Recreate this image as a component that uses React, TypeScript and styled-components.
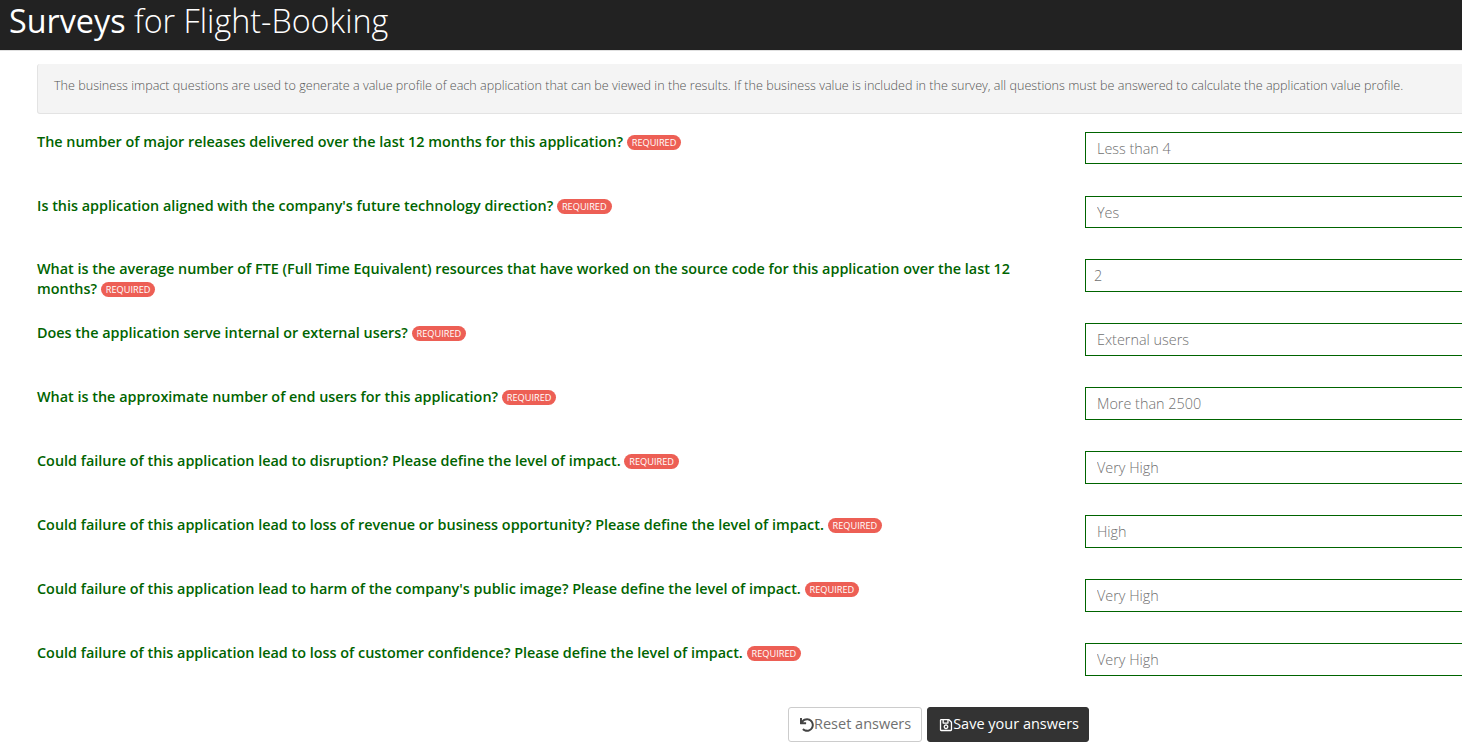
import React from "react";
import styled, { createGlobalStyle } from "styled-components";
import { FaUndo, FaRegSave } from "react-icons/fa";

const questions = [
  { text: "The number of major releases delivered over the last 12 months for this application?", answer: "Less than 4", compact: true },
  { text: "Is this application aligned with the company's future technology direction?", answer: "Yes", compact: true, short: true },
  { text: "What is the average number of FTE (Full Time Equivalent) resources that have worked on the source code for this application over the last 12 months?", answer: "2", numeric: true },
  { text: "Does the application serve internal or external users?", answer: "External users" },
  { text: "What is the approximate number of end users for this application?", answer: "More than 2500" },
  { text: "Could failure of this application lead to disruption? Please define the level of impact.", answer: "Very High" },
  { text: "Could failure of this application lead to loss of revenue or business opportunity? Please define the level of impact.", answer: "High" },
  { text: "Could failure of this application lead to harm of the company's public image? Please define the level of impact.", answer: "Very High" },
  { text: "Could failure of this application lead to loss of customer confidence? Please define the level of impact.", answer: "Very High" },
];

const App = () => {
  return (
    <>
      <GlobalStyle />
      <Header>
        <Title>
          <strong>Surveys</strong> for Flight-Booking
        </Title>
      </Header>
      <Main>
        <Well>
          The business impact questions are used to generate a value profile of each application that can be viewed in the results. If the business value is included in the survey, all questions must be answered to calculate the application value profile.
        </Well>
        <Form>
          {questions.map((q, i) => (
            <Row key={i} $short={q.short}>
              <Question>
                {q.text} <Badge>REQUIRED</Badge>
              </Question>
              <Answer readOnly value={q.answer} $numeric={q.numeric} $compact={q.compact} />
            </Row>
          ))}
        </Form>
        <Actions>
          <ResetButton type="button">
            <FaUndo size={14} />
            Reset answers
          </ResetButton>
          <SaveButton type="button">
            <FaRegSave size={14} />
            Save your answers
          </SaveButton>
        </Actions>
      </Main>
    </>
  );
};

const GlobalStyle = createGlobalStyle`
  html, body {
    margin: 0;
    padding: 0;
    background: #fff;
    overflow: hidden;
  }
  body {
    height: 751px;
    font-family: "Open Sans", "Liberation Sans", sans-serif;
    font-size: 14px;
  }
`;
const Header = styled.header`
  height: 51px;
  background: #222222;
  border-bottom: 1px solid #e0e0e0;
  box-sizing: border-box;
  padding-left: 9px;
  display: flex;
  align-items: flex-start;
`;
const Title = styled.h1`
  margin: 0;
  font-size: 32.3px;
  line-height: 41px;
  font-weight: 300;
  color: #fff;
  white-space: nowrap;
  strong {
    font-weight: 400;
  }
`;
const Main = styled.main`
  padding: 13px 0 0 37px;
  width: 1500px;
  box-sizing: border-box;
`;
const Well = styled.div`
  height: 50px;
  box-sizing: border-box;
  background: #f4f4f4;
  border: 1px solid #e3e3e3;
  border-top: none;
  border-radius: 3px;
  padding: 13px 16px 0;
  font-size: 12.6px;
  line-height: 17px;
  font-weight: 300;
  color: #555;
  white-space: nowrap;
`;
const Form = styled.div`
  margin-top: 18px;
  display: flex;
  flex-direction: column;
`;
const Row = styled.div<{ $short?: boolean }>`
  display: grid;
  grid-template-columns: 1048px 1fr;
  height: ${(p) => (p.$short ? "63px" : "64px")};
`;
const Question = styled.div`
  font-size: 14.4px;
  line-height: 20px;
  font-weight: 600;
  color: #006400;
  padding-right: 30px;
`;
const Badge = styled.span`
  display: inline-block;
  vertical-align: 1px;
  padding: 0 5px;
  height: 15px;
  line-height: 15px;
  border-radius: 8px;
  background: #ed5f55;
  color: #fff;
  font-size: 9.2px;
  font-weight: 400;
`;
const Answer = styled.input<{ $numeric?: boolean; $compact?: boolean }>`
  box-sizing: border-box;
  width: 100%;
  height: ${(p) => (p.$compact ? "32px" : "33px")};
  padding: 0 ${(p) => (p.$numeric ? "8px" : "11px")};
  border: 1px solid #006400;
  border-radius: 0;
  outline: none;
  background: #fff;
  font-family: "Open Sans", "Liberation Sans", sans-serif;
  font-size: 14.4px;
  font-weight: 300;
  color: #707070;
`;
const Actions = styled.div`
  padding-left: 751px;
  display: flex;
  gap: 5px;
`;
const ButtonBase = styled.button`
  height: 35px;
  box-sizing: border-box;
  display: inline-flex;
  align-items: center;
  padding: 0 10px 2px 11px;
  border-radius: 3px;
  font-family: "Open Sans", "Liberation Sans", sans-serif;
  font-size: 14.5px;
  font-weight: 400;
  white-space: nowrap;
  svg {
    margin-top: 2px;
  }
`;
const ResetButton = styled(ButtonBase)`
  background: #fff;
  border: 1px solid #cccccc;
  color: #707070;
  svg {
    color: #444;
  }
`;
const SaveButton = styled(ButtonBase)`
  background: #333333;
  border: 1px solid #333333;
  color: #fff;
  padding-right: 9px;
`;

export default App;
